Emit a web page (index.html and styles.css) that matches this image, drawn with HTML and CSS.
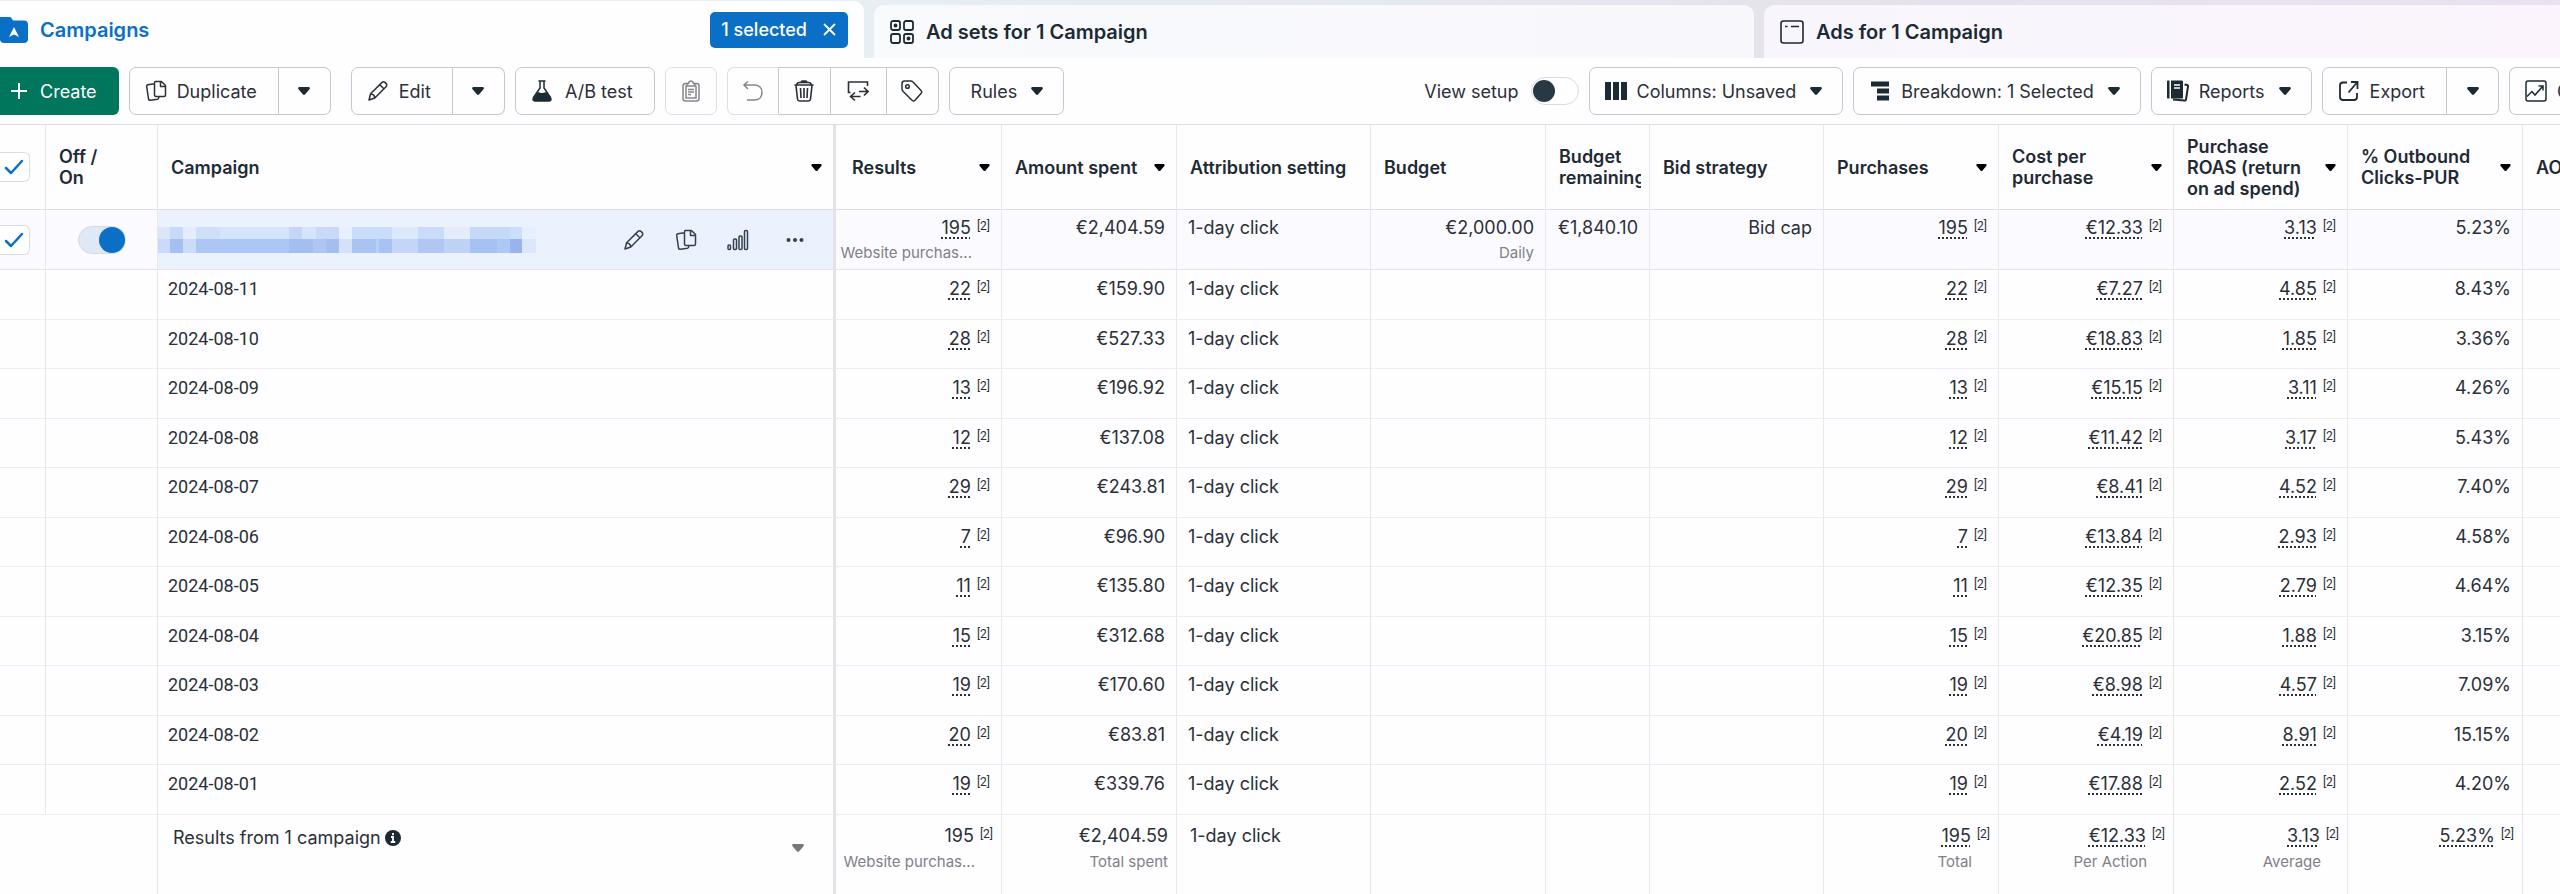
FILE: index.html
```html
<!DOCTYPE html>
<html lang="en">
<head>
    <meta charset="UTF-8">
    <title>Campaigns</title>
    <link rel="stylesheet" href="styles.css">
</head>
<body>
    <svg class="defs" aria-hidden="true">
        <symbol id="caret" viewBox="0 0 12 8"><path d="M1.5 0h9c1.2 0 1.8 1.3 1 2.2L7.2 7.3c-.7.8-1.7.8-2.4 0L.5 2.2C-.3 1.3.3 0 1.5 0z" fill="currentColor"/></symbol>
        <symbol id="copy" viewBox="0 0 22 22"><path d="M10.5 1.5h6l4 4v9.5c0 1-.6 1.5-1.500 1.500h-8c-1 0-1.500-.6-1.500-1.500V3c0-1 .5-1.500 1-1.500zM15.500 2v4.500h5M9 3.800 3 4.800c-1 .2-1.500.8-1.300 1.800l1.800 12.400c.2 1 .8 1.400 1.800 1.300l7.200-1.100c.8-.2 1.300-.8 1.300-1.700v-.8" fill="none" stroke="currentColor" stroke-width="1.500" stroke-linejoin="round"/></symbol>
        <symbol id="pencil" viewBox="0 0 22 22"><path d="M2 20l1.600-6.200L14.800 2.600c1-1 2.400-1 3.400 0l.8.8c1 1 1 2.400 0 3.400L7.800 18 2 20zM12.800 4.700l4.300 4.300M3.800 14c2.300.2 3.800 1.700 4 4" fill="none" stroke="currentColor" stroke-width="1.500" stroke-linejoin="round"/></symbol>
        <symbol id="check" viewBox="0 0 20 16"><path d="M2 9l5 5L18 2" fill="none" stroke="currentColor" stroke-width="2.500" stroke-linecap="round" stroke-linejoin="round"/></symbol>
    </svg>

    <nav class="tabs">
        <div class="tab active">
            <svg class="folder" width="28" height="26" viewBox="0 0 28 26"><path d="M0 0h9c1.500 0 2 .4 2.700 1.500L13 3.500h11c2.500 0 4 1.500 4 4V22c0 2.500-1.500 4-4 4H4c-2.500 0-4-1.500-4-4z" fill="#0a6fc6"/><path d="M14 10l5 10-5-2.500L9 20z" fill="#fff"/></svg>
            <a href="#">Campaigns</a>
            <button class="selected">1 selected
                <svg width="13" height="13" viewBox="0 0 13 13"><path d="M1.500 1.500l10 10M11.500 1.500l-10 10" stroke="#fff" stroke-width="1.800" stroke-linecap="round"/></svg>
            </button>
        </div>
        <div class="tab">
            <svg width="24" height="24" viewBox="0 0 24 24" fill="none" stroke="#1c2b33" stroke-width="1.800"><rect x="1" y="1" width="9" height="9" rx="2"/><rect x="14" y="1" width="9" height="9" rx="2"/><rect x="1" y="14" width="9" height="9" rx="2"/><rect x="14" y="14" width="9" height="9" rx="2"/><circle cx="5.500" cy="5.500" r="1.900" fill="#1c2b33" stroke="none"/><circle cx="18.500" cy="18.500" r="1.900" fill="#1c2b33" stroke="none"/></svg>
            <a href="#">Ad sets for 1 Campaign</a>
        </div>
        <div class="tab last">
            <svg width="24" height="24" viewBox="0 0 24 24" fill="none" stroke="#1c2b33" stroke-width="1.600"><rect x="1" y="1" width="22" height="22" rx="2.500"/><path d="M5 6.500h2.500M11 6.500h8"/></svg>
            <a href="#">Ads for 1 Campaign</a>
        </div>
    </nav>

    <div class="toolbar">
        <button class="btn create"><svg width="16" height="16" viewBox="0 0 16 16"><path d="M8 0v16M0 8h16" stroke="#fff" stroke-width="2"/></svg>Create</button>
        <div class="group wide">
            <button class="btn"><svg width="22" height="22"><use href="#copy"/></svg>Duplicate</button>
            <button class="btn drop" aria-label="More duplicate options"><svg class="caret"><use href="#caret"/></svg></button>
        </div>
        <div class="group">
            <button class="btn"><svg width="22" height="22"><use href="#pencil"/></svg>Edit</button>
            <button class="btn drop" aria-label="More edit options"><svg class="caret"><use href="#caret"/></svg></button>
        </div>
        <button class="btn test"><svg width="22" height="22" viewBox="0 0 22 22"><path d="M7.500 1h7M9 1v7L2.500 17.500C1.500 19.500 2 21 4 21h14c2 0 2.500-1.500 1.500-3.500L13 8V1" fill="none" stroke="#1c2b33" stroke-width="1.500"/><path d="M6.300 12.500c2-1 3.500 1 5.500.5 1.500-.4 2.500-1 3.800-.5l4 6c.6 1.500 0 2.500-1.600 2.500H4c-1.600 0-2.200-1-1.600-2.500z" fill="#1c2b33"/></svg>A/B test</button>
        <button class="btn drop off" aria-label="Paste"><svg width="22" height="22" viewBox="0 0 22 22" fill="none" stroke="currentColor" stroke-width="1.500"><path d="M7 3.500H5.500c-1.500 0-2.500 1-2.500 2.500v12.500C3 20 4 21 5.500 21h11c1.500 0 2.500-1 2.500-2.500V6c0-1.500-1-2.500-2.500-2.500H15"/><path d="M7 6V3.500h1.500C9 1.800 9.700 1 11 1s2 .8 2.500 2.500H15V6zM6 5.500v12.500h10V5.500M8 9.500h6M8 12h6M8 14.500h3"/></svg></button>
        <div class="group">
            <button class="btn drop off" aria-label="Undo"><svg width="22" height="22" viewBox="0 0 22 22" fill="none" stroke="currentColor" stroke-width="1.500"><path d="M6 1.500L2 5l4 4M2 5h10.500c4.500 0 7.500 3 7.500 7.500S17 20 12.500 20H5"/></svg></button>
            <button class="btn drop" aria-label="Delete"><svg width="22" height="22" viewBox="0 0 22 22" fill="none" stroke="currentColor" stroke-width="1.600"><path d="M1.500 5h19M3 5.500l1.500 13.500c.2 1.300.8 2 2 2h9c1.200 0 1.800-.7 2-2L19 5.500M3.500 5C4 3 5 2.500 6.500 2.500h9C17 2.500 18 3 18.500 5M8 2.500C8.200 1.300 8.800 1 9.500 1h3c.7 0 1.300.3 1.500 1.500M7.500 8l.5 10M11 8v10M14.500 8L14 18"/></svg></button>
            <button class="btn drop swap" aria-label="Compare"><svg width="22" height="22" viewBox="0 0 22 22" fill="none" stroke="currentColor" stroke-width="1.600"><path d="M3.500 12.500H1.500V2h19v4M21 11.500h-9M17 7.500l4 4-4 4M3.500 16.500h10M8 12.500l-4.500 4 4.500 4"/></svg></button>
            <button class="btn drop" aria-label="Tag"><svg width="22" height="22" viewBox="0 0 22 22" fill="none" stroke="currentColor" stroke-width="1.500" stroke-linejoin="round"><path d="M1 3.500C1 1.800 2 1 3.500 1h6c1 0 1.700.2 2.500 1l8 8.500c1 1 1 2 0 3l-6 6.800c-1 1-2 1-3 0L2.200 11.500C1.300 10.500 1 9.800 1 8.800z"/><circle cx="6.500" cy="6.500" r="1.800"/></svg></button>
        </div>
        <button class="btn menu rules">Rules<svg class="caret"><use href="#caret"/></svg></button>

        <div class="right">
            <label class="setup">View setup<input type="checkbox" class="toggle small"></label>
            <button class="btn menu"><svg width="22" height="22" viewBox="0 0 22 22"><path d="M0 2h6v18H0zM8 2h6v18H8zM16 2h6v18h-6z" fill="#1c2b33"/></svg>Columns: Unsaved<svg class="caret"><use href="#caret"/></svg></button>
            <button class="btn menu"><svg width="22" height="22" viewBox="0 0 22 22"><path d="M2 1.500h18v5H2zM8 8.500h12v5H8zM8 15.500h12v5H8z" fill="#1c2b33"/></svg>Breakdown: 1 Selected<svg class="caret"><use href="#caret"/></svg></button>
            <button class="btn menu"><svg width="22" height="22" viewBox="0 0 22 22"><path d="M0 1.500C0 .8.500.500 1 .500h1.500v18H1c-.6 0-1-.4-1-1zM4 .500h10.500c1 0 1.500.5 1.500 1.500v15c0 1-.5 1.500-1.500 1.500H4z" fill="#1c2b33"/><path d="M7 5h6M7 8h6" stroke="#fff" stroke-width="1.300"/><path d="M17.500 4.500l2.500.5c.9.2 1.200.7 1 1.500l-2 13c-.2.900-.8 1.200-1.600 1L6 19.500" fill="none" stroke="#1c2b33" stroke-width="2"/></svg>Reports<svg class="caret"><use href="#caret"/></svg></button>
            <div class="group">
                <button class="btn"><svg width="22" height="22" viewBox="0 0 22 22" fill="none" stroke="#1c2b33" stroke-width="1.800"><path d="M9 2.500H5c-1.700 0-3 1-3 3V17c0 2 1.300 3 3 3h11c2 0 3-1 3-3v-4M13 2h6.500v7M19 2.500l-8.500 10"/></svg>Export</button>
                <button class="btn drop" aria-label="More export options"><svg class="caret"><use href="#caret"/></svg></button>
            </div>
            <button class="btn cut"><svg width="22" height="22" viewBox="0 0 22 22" fill="none" stroke="#1c2b33" stroke-width="1.500"><rect x="1" y="1" width="20" height="20" rx="2"/><path d="M2 16.500l5-5 3 3.500 7.500-8.500M13.500 6h4.500v4.500"/></svg>Charts</button>
        </div>
    </div>

    <table class="grid">
        <colgroup>
            <col class="c-check"><col class="c-onoff"><col><col class="c-results"><col class="c-std"><col class="c-attr"><col class="c-std"><col class="c-remain"><col class="c-bid"><col class="c-std"><col class="c-std"><col class="c-bid"><col class="c-std"><col class="c-aov">
        </colgroup>
        <thead>
            <tr>
                <th><label class="box"><input type="checkbox" checked aria-label="Select all"><svg><use href="#check"/></svg></label></th>
                <th>Off /<br>On</th>
                <th class="name"><div class="head">Campaign<svg class="caret"><use href="#caret"/></svg></div></th>
                <th class="results"><div class="head">Results<svg class="caret"><use href="#caret"/></svg></div></th>
                <th><div class="head">Amount spent<svg class="caret"><use href="#caret"/></svg></div></th>
                <th class="tight">Attribution setting</th>
                <th>Budget</th>
                <th class="tight"><div class="clip">Budget<br>remaining</div></th>
                <th>Bid strategy</th>
                <th><div class="head">Purchases<svg class="caret"><use href="#caret"/></svg></div></th>
                <th><div class="head">Cost per purchase<svg class="caret"><use href="#caret"/></svg></div></th>
                <th><div class="head">Purchase ROAS (return on ad spend)<svg class="caret"><use href="#caret"/></svg></div></th>
                <th><div class="head">% Outbound Clicks-PUR<svg class="caret"><use href="#caret"/></svg></div></th>
                <th class="edge">AOV</th>
            </tr>
        </thead>
        <tbody>
            <tr class="campaign">
                <td class="mid"><label class="box"><input type="checkbox" checked aria-label="Select campaign"><svg><use href="#check"/></svg></label></td>
                <td class="mid"><input type="checkbox" class="toggle" checked aria-label="Campaign on"></td>
                <td class="name mid">
                    <div class="row">
                        <div class="masked"><div class="upper"></div><div class="lower"></div></div>
                        <div class="actions">
                            <button aria-label="Edit"><svg width="22" height="22"><use href="#pencil"/></svg></button>
                            <button aria-label="Duplicate"><svg width="22" height="22"><use href="#copy"/></svg></button>
                            <button aria-label="Charts"><svg width="22" height="22" viewBox="0 0 22 22" fill="none" stroke="currentColor" stroke-width="1.500"><rect x="1" y="16" width="2.500" height="4.500" rx="1"/><rect x="6.500" y="10" width="3" height="10.500" rx="1"/><rect x="12" y="7" width="3" height="13.500" rx="1"/><rect x="17.500" y="1.500" width="3" height="19" rx="1"/></svg></button>
                            <button class="more" aria-label="More"><svg width="18" height="6" viewBox="0 0 18 6" fill="currentColor"><circle cx="2.500" cy="3" r="2"/><circle cx="9" cy="3" r="2"/><circle cx="15.500" cy="3" r="2"/></svg></button>
                        </div>
                    </div>
                </td>
                <td class="num"><span>195</span><sup>[2]</sup><small class="in">Website purchas...</small></td>
                <td class="num">€2,404.59</td><td>1-day click</td>
                <td class="num">€2,000.00<small>Daily</small></td><td class="num">€1,840.10</td><td class="num">Bid cap</td>
                <td class="num"><span>195</span><sup>[2]</sup></td><td class="num"><span>€12.33</span><sup>[2]</sup></td><td class="num"><span>3.13</span><sup>[2]</sup></td><td class="num">5.23%</td><td></td>
            </tr>
            <tr>
                <td></td><td></td><td class="name date">2024-08-11</td>
                <td class="num"><span>22</span><sup>[2]</sup></td><td class="num">€159.90</td><td>1-day click</td><td></td><td></td><td></td>
                <td class="num"><span>22</span><sup>[2]</sup></td><td class="num"><span>€7.27</span><sup>[2]</sup></td><td class="num"><span>4.85</span><sup>[2]</sup></td><td class="num">8.43%</td><td></td>
            </tr>
            <tr>
                <td></td><td></td><td class="name date">2024-08-10</td>
                <td class="num"><span>28</span><sup>[2]</sup></td><td class="num">€527.33</td><td>1-day click</td><td></td><td></td><td></td>
                <td class="num"><span>28</span><sup>[2]</sup></td><td class="num"><span>€18.83</span><sup>[2]</sup></td><td class="num"><span>1.85</span><sup>[2]</sup></td><td class="num">3.36%</td><td></td>
            </tr>
            <tr>
                <td></td><td></td><td class="name date">2024-08-09</td>
                <td class="num"><span>13</span><sup>[2]</sup></td><td class="num">€196.92</td><td>1-day click</td><td></td><td></td><td></td>
                <td class="num"><span>13</span><sup>[2]</sup></td><td class="num"><span>€15.15</span><sup>[2]</sup></td><td class="num"><span>3.11</span><sup>[2]</sup></td><td class="num">4.26%</td><td></td>
            </tr>
            <tr>
                <td></td><td></td><td class="name date">2024-08-08</td>
                <td class="num"><span>12</span><sup>[2]</sup></td><td class="num">€137.08</td><td>1-day click</td><td></td><td></td><td></td>
                <td class="num"><span>12</span><sup>[2]</sup></td><td class="num"><span>€11.42</span><sup>[2]</sup></td><td class="num"><span>3.17</span><sup>[2]</sup></td><td class="num">5.43%</td><td></td>
            </tr>
            <tr>
                <td></td><td></td><td class="name date">2024-08-07</td>
                <td class="num"><span>29</span><sup>[2]</sup></td><td class="num">€243.81</td><td>1-day click</td><td></td><td></td><td></td>
                <td class="num"><span>29</span><sup>[2]</sup></td><td class="num"><span>€8.41</span><sup>[2]</sup></td><td class="num"><span>4.52</span><sup>[2]</sup></td><td class="num">7.40%</td><td></td>
            </tr>
            <tr>
                <td></td><td></td><td class="name date">2024-08-06</td>
                <td class="num"><span>7</span><sup>[2]</sup></td><td class="num">€96.90</td><td>1-day click</td><td></td><td></td><td></td>
                <td class="num"><span>7</span><sup>[2]</sup></td><td class="num"><span>€13.84</span><sup>[2]</sup></td><td class="num"><span>2.93</span><sup>[2]</sup></td><td class="num">4.58%</td><td></td>
            </tr>
            <tr>
                <td></td><td></td><td class="name date">2024-08-05</td>
                <td class="num"><span>11</span><sup>[2]</sup></td><td class="num">€135.80</td><td>1-day click</td><td></td><td></td><td></td>
                <td class="num"><span>11</span><sup>[2]</sup></td><td class="num"><span>€12.35</span><sup>[2]</sup></td><td class="num"><span>2.79</span><sup>[2]</sup></td><td class="num">4.64%</td><td></td>
            </tr>
            <tr>
                <td></td><td></td><td class="name date">2024-08-04</td>
                <td class="num"><span>15</span><sup>[2]</sup></td><td class="num">€312.68</td><td>1-day click</td><td></td><td></td><td></td>
                <td class="num"><span>15</span><sup>[2]</sup></td><td class="num"><span>€20.85</span><sup>[2]</sup></td><td class="num"><span>1.88</span><sup>[2]</sup></td><td class="num">3.15%</td><td></td>
            </tr>
            <tr>
                <td></td><td></td><td class="name date">2024-08-03</td>
                <td class="num"><span>19</span><sup>[2]</sup></td><td class="num">€170.60</td><td>1-day click</td><td></td><td></td><td></td>
                <td class="num"><span>19</span><sup>[2]</sup></td><td class="num"><span>€8.98</span><sup>[2]</sup></td><td class="num"><span>4.57</span><sup>[2]</sup></td><td class="num">7.09%</td><td></td>
            </tr>
            <tr>
                <td></td><td></td><td class="name date">2024-08-02</td>
                <td class="num"><span>20</span><sup>[2]</sup></td><td class="num">€83.81</td><td>1-day click</td><td></td><td></td><td></td>
                <td class="num"><span>20</span><sup>[2]</sup></td><td class="num"><span>€4.19</span><sup>[2]</sup></td><td class="num"><span>8.91</span><sup>[2]</sup></td><td class="num">15.15%</td><td></td>
            </tr>
            <tr>
                <td></td><td></td><td class="name date">2024-08-01</td>
                <td class="num"><span>19</span><sup>[2]</sup></td><td class="num">€339.76</td><td>1-day click</td><td></td><td></td><td></td>
                <td class="num"><span>19</span><sup>[2]</sup></td><td class="num"><span>€17.88</span><sup>[2]</sup></td><td class="num"><span>2.52</span><sup>[2]</sup></td><td class="num">4.20%</td><td></td>
            </tr>
        </tbody>
        <tfoot>
            <tr>
                <td colspan="2"></td>
                <td class="name">
                    <div class="total">
                        <div class="label">Results from 1 campaign<svg width="16" height="16" viewBox="0 0 16 16"><circle cx="8" cy="8" r="8" fill="#1c2b33"/><path d="M8 3v2.200M6 7h2v5M5.800 12h4.400" fill="none" stroke="#fff" stroke-width="1.800"/></svg></div>
                        <svg class="caret"><use href="#caret"/></svg>
                    </div>
                </td>
                <td class="num">195<sup>[2]</sup><small class="in">Website purchas...</small></td>
                <td class="num">€2,404.59<small>Total spent</small></td><td>1-day click</td><td></td><td></td><td></td>
                <td class="num"><span>195</span><sup>[2]</sup><small class="in">Total</small></td>
                <td class="num"><span>€12.33</span><sup>[2]</sup><small class="in">Per Action</small></td>
                <td class="num"><span>3.13</span><sup>[2]</sup><small class="in">Average</small></td>
                <td class="num"><span>5.23%</span><sup>[2]</sup></td><td></td>
            </tr>
        </tfoot>
    </table>
</body>
</html>
```

FILE: styles.css
```css
*{box-sizing:border-box;}
body{
    margin:0;
    overflow: hidden;
    background-color: #fefdff;
    color: #2b3037;
    font-family: Inter, "Noto Sans", sans-serif;
    font-size: 18px;
}
a{color: inherit;text-decoration: none;}
button{
    padding: 0;
    border: none;
    background: none;
    color: inherit;
    font: inherit;
    cursor: pointer;
}
svg{flex: none;}
.defs{display: none;}
.caret{width: 12px;height: 8px;}

/* tabs */
.tabs{
    display: grid;
    grid-template-columns: 864fr 880fr 796fr;
    column-gap: 10px;
    height: 58px;
    background: linear-gradient(90deg, #e8f0f5 30%, #e5e3ec 70%, #eae0f0);
}
.tab{
    display: flex;
    align-items: center;
    gap: 12px;
    margin-top: 5px;
    padding: 0 16px;
    border-radius: 10px 10px 0 0;
    background: linear-gradient(90deg, #f8fafe, #f8f7fc);
    color: #1c2b33;
    font-size: 20px;
    font-weight: 600;
}
.tab.last{
    border-radius: 10px 0 0 0;
    background: linear-gradient(90deg, #f8f6fc, #fbf4fc);
}
.tab.active{
    margin-top: 1px;
    padding: 0 16px 0 0;
    border-radius: 0 10px 0 0;
    background: #fefdff;
    color: #0a6fc6;
}
.selected{
    display: flex;
    align-items: center;
    gap: 16px;
    height: 36px;
    margin-left: auto;
    padding: 0 12px 0 11px;
    border-radius: 5px;
    background-color: #0a6fc6;
    color: #fff;
    font-size: 18px;
    font-weight: 500;
}

/* toolbar */
.toolbar{
    display: flex;
    align-items: center;
    gap: 10px;
    padding: 9px 0;
    border-bottom: 1px solid #dfdde4;
}
.btn{
    display: flex;
    flex: none;
    align-items: center;
    gap: 10px;
    height: 48px;
    padding: 0 21px 0 15px;
    border: 1px solid #c8c6ce;
    border-radius: 7px;
    color: #2b3037;
    white-space: nowrap;
}
.group{display: flex;flex: none;}
.group.wide{margin-right: 10px;}
.group .btn + .btn{border-left: none;}
.group .btn:not(:first-child){border-top-left-radius: 0;border-bottom-left-radius: 0;}
.group .btn:not(:last-child){border-top-right-radius: 0;border-bottom-right-radius: 0;}
.btn.create{
    gap: 13px;
    padding: 0 22px 0 11px;
    border: none;
    border-radius: 0 6px 6px 0;
    background-color: #00765c;
    color: #fff;
}
.btn.test{gap: 12px;}
.btn.drop{
    justify-content: center;
    width: 52px;
    padding: 0;
}
.btn.swap{width: 56px;}
.btn.off{border-color: #e0dee5;color: #85868c;}
.group .btn.off{border-right-color: #c8c6ce;}
.btn .caret{color: #1c2b33;}
.btn.menu{padding-right: 20px;}
.btn.menu .caret{margin-left: 4px;}
.btn.rules{padding-left: 21px;}
.right{
    display: flex;
    align-items: center;
    gap: 10px;
    margin-left: auto;
}
.btn.cut{
    width: 51px;
    overflow: hidden;
    border-right: none;
    border-radius: 7px 0 0 7px;
}
.setup{
    display: flex;
    align-items: center;
    gap: 12px;
}
.toggle{
    appearance: none;
    display: flex;
    align-items: center;
    width: 48px;
    height: 28px;
    margin: 0 auto;
    border: 1px solid #d8dae2;
    border-radius: 14px;
    background-color: #dfe9f6;
}
.toggle::before{
    content: "";
    width: 26px;
    height: 26px;
    margin-left: 20px;
    border-radius: 50%;
    background-color: #0a6fc6;
}
.toggle.small{background-color: #fff;}
.toggle.small::before{
    width: 22px;
    height: 22px;
    margin-left: 1px;
    background-color: #283943;
}

/* table */
.grid{
    width: 100%;
    table-layout: fixed;
    border-collapse: separate;
    border-spacing: 0;
}
.c-check{width: 46px;}
.c-onoff{width: 112px;}
.c-results{width: 166px;}
.c-std{width: 175px;}
.c-attr{width: 194px;}
.c-remain{width: 104px;}
.c-bid{width: 174px;}
.c-aov{width: 37px;}
th{
    height: 85px;
    padding: 0 11px 0 13px;
    border-right: 1px solid #e9e7ee;
    border-bottom: 1px solid #dfdde4;
    color: #1f2a33;
    font-weight: 600;
    line-height: 21px;
    text-align: left;
}
td{
    height: 49px;
    padding: 7px 11px 0 11px;
    border-right: 1px solid #e9e7ee;
    border-bottom: 1px solid #efedf3;
    line-height: 24px;
    vertical-align: top;
    white-space: nowrap;
}
tbody tr:nth-child(even) td{height: 50px;}
th.name,td.name{border-right: 3px solid #e4e2e9;}
td.date{
    padding-left: 10px;
    font-family: Roboto, "Noto Sans", sans-serif;
}
th:first-child,td.mid{padding: 0;vertical-align: middle;}
th.results{padding-left: 16px;}
th.tight{padding-right: 8px;}
th.edge{
    padding-right: 0;
    overflow: hidden;
}
th:last-child,td:last-child{border-right: none;}
.clip{overflow: hidden;}
.head{
    display: flex;
    align-items: center;
    justify-content: space-between;
    gap: 14px;
}
.head .caret{width: 11px;height: 7px;color: #000;}
.box{
    display: flex;
    align-items: center;
    width: 30px;
    height: 30px;
    padding-left: 4px;
    border: 1px solid #dcdae2;
    border-left: none;
    border-radius: 0 6px 6px 0;
    background-color: #fff;
    color: #0a6fc6;
}
.box input{
    appearance: none;
    width: 0;
    height: 0;
    margin: 0;
}
.box svg{width: 20px;height: 16px;}
.campaign td{
    height: 60px;
    padding-top: 6px;
    border-bottom-color: #e6e4eb;
    background-color: #fbfafe;
}
.campaign td.mid{padding-top: 0;}
.campaign td.name{background-color: #ebf2fe;}
.row{
    display: flex;
    align-items: center;
    justify-content: space-between;
    padding-right: 21px;
}
/* campaign name is pixelated */
.masked{width: 380px;}
.masked .upper{
    height: 12px;
    background: linear-gradient(90deg, #dbe6fb 0 12px, #c8dafa 12px 25px, #e4edfd 25px 38px, #cfdffa 38px 62px, #d5e3fb 62px 131px, #c3d6f7 131px 144px, #d6e4fb 144px 158px, #c8daf8 158px 181px, #e8f0fe 181px 194px, #c9dcf9 194px 234px, #dce8fc 234px 260px, #c9dbf9 260px 286px, #e3ecfd 286px 312px, #c5d8f8 312px 352px, #cddefa 352px 364px, #e6effe 364px 378px, #ebf2fe 378px);
}
.masked .lower{
    height: 14px;
    background: linear-gradient(90deg, #c9dafa 0 12px, #a3c0f0 12px 25px, #cbdcf9 25px 38px, #acc7f3 38px 131px, #a2bff0 131px 155px, #adc7f2 155px 168px, #a3bff0 168px 181px, #d3e1fb 181px 194px, #a9c3f2 194px 218px, #b9cff5 218px 221px, #a8c2f1 221px 234px, #c4d6f8 234px 260px, #afc7f2 260px 286px, #bed2f5 286px 312px, #a5c2f3 312px 339px, #adc8f5 339px 352px, #97b4ec 352px 364px, #dbe7fc 364px 378px, #ebf2fe 378px);
}
.actions{
    display: flex;
    align-items: center;
    gap: 28px;
    color: #33404d;
}
.actions button{
    display: flex;
    justify-content: center;
    width: 24px;
}
.actions .more{width: 34px;}
.num{text-align: right;}
.num span{
    text-decoration: underline dotted #2b3037;
    text-decoration-thickness: 2px;
    text-underline-offset: 3px;
}
.num sup{
    margin-left: 6px;
    font-family: Roboto, "Noto Sans", sans-serif;
    font-size: 12px;
    line-height: 0;
    vertical-align: 4px;
}
small{
    display: block;
    color: #808187;
    font-size: 15px;
    line-height: 26px;
}
small.in{margin-left: -8px;padding-right: 18px;}
tfoot td{
    height: 80px;
    padding: 9px 8px 0 13px;
    border-bottom: none;
}
tfoot td.name{padding-left: 15px;}
tfoot small{line-height: 28px;}
.total{
    display: flex;
    align-items: center;
    justify-content: space-between;
    padding-right: 21px;
}
.total .label{
    display: flex;
    align-items: center;
    gap: 4px;
}
.total .caret{margin-top: 20px;color: #77787e;}
```
